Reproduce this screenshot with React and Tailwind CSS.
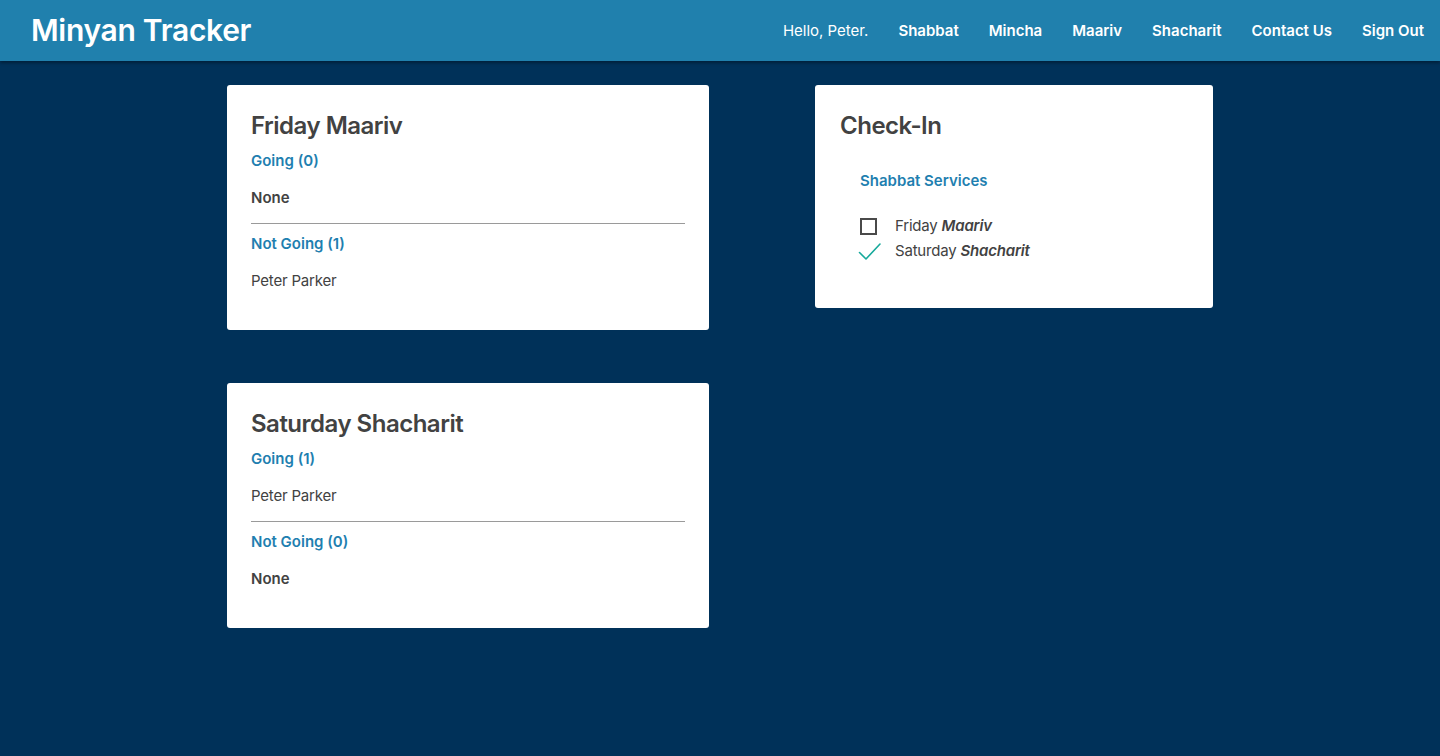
import React from 'react';

const navLinks = ['Shabbat', 'Mincha', 'Maariv', 'Shacharit', 'Contact Us', 'Sign Out'];

const services = [
  {
    id: 'fri-maariv',
    title: 'Friday Maariv',
    going: [],
    notGoing: ['Peter Parker'],
  },
  {
    id: 'sat-shacharit',
    title: 'Saturday Shacharit',
    going: ['Peter Parker'],
    notGoing: [],
  },
];

const PeopleList = ({ people }) =>
  people.length === 0 ? (
    <p className="mt-[17px] text-[15px] leading-5 font-semibold text-[#424242]">None</p>
  ) : (
    <div className="mt-[17px] space-y-2">
      {people.map((p) => (
        <p key={p} className="text-[15px] leading-5 text-[#424242] tracking-[-0.2px]">{p}</p>
      ))}
    </div>
  );

const ServiceCard = ({ service }) => (
  <div className="bg-white rounded-[3px] px-6 pt-[25px] pb-[39px]">
    <h2 className="text-2xl leading-8 font-semibold text-[#424242] tracking-[-0.5px]">{service.title}</h2>

    <h3 className="mt-[9px] text-[15px] leading-5 font-semibold text-[#1f7fb0]">
      Going ({service.going.length})
    </h3>
    <PeopleList people={service.going} />

    <hr className="mt-[15px] border-0 border-t border-[#9a9a9a]" />

    <h3 className="mt-[10px] text-[15px] leading-5 font-semibold text-[#1f7fb0]">
      Not Going ({service.notGoing.length})
    </h3>
    <PeopleList people={service.notGoing} />
  </div>
);

const CheckMark = () => (
  <svg width="24" height="20" viewBox="0 0 24 20" fill="none">
    <path d="M1.5 10.5 L8 17 L22 2" stroke="#16a99b" strokeWidth="1.6" strokeLinecap="round" strokeLinejoin="round" />
  </svg>
);

const CheckInRow = ({ day, service, checked }) => (
  <div className="flex items-center h-[25px]">
    <div className="w-[35px] flex items-center">
      {checked ? (
        <div className="-ml-[2px]">
          <CheckMark />
        </div>
      ) : (
        <div className="w-[17px] h-[17px] border-2 border-[#4a4a4a]" />
      )}
    </div>
    <span className="text-[15px] text-[#424242] tracking-[-0.2px]">
      {day} <span className="italic font-semibold">{service}</span>
    </span>
  </div>
);

export default function App() {
  return (
    <div className="min-h-[756px] bg-[#003159] font-['Inter',sans-serif]">
      {/* Header */}
      <header className="h-[61px] bg-[#2080ad] flex items-center justify-between pl-[31px] pr-4 shadow-[0_2px_3px_rgba(0,0,0,0.35)] relative">
        <h1 className="text-[30px] font-semibold text-white tracking-[-0.3px]">Minyan Tracker</h1>
        <nav className="flex items-center gap-[30px] pt-[2px] text-[15px] text-white">
          <span>Hello, Peter.</span>
          {navLinks.map((link) => (
            <a key={link} href="#" className="font-semibold">
              {link}
            </a>
          ))}
        </nav>
      </header>

      {/* Main */}
      <main className="w-[986px] mx-auto pt-6 flex gap-[106px] items-start">
        <div className="w-[482px] flex flex-col gap-[53px]">
          {services.map((s) => (
            <ServiceCard key={s.id} service={s} />
          ))}
        </div>

        <div className="w-[398px] bg-white rounded-[3px] pl-[25px] pr-6 pt-[25px] pb-[44px]">
          <h2 className="text-2xl leading-8 font-semibold text-[#424242] tracking-[-0.5px]">Check-In</h2>
          <div className="pl-5">
            <h3 className="mt-[29px] text-[15px] leading-5 font-semibold text-[#1f7fb0]">Shabbat Services</h3>
            <div className="mt-[23px]">
              <CheckInRow day="Friday" service="Maariv" checked={false} />
              <CheckInRow day="Saturday" service="Shacharit" checked />
            </div>
          </div>
        </div>
      </main>
    </div>
  );
}
